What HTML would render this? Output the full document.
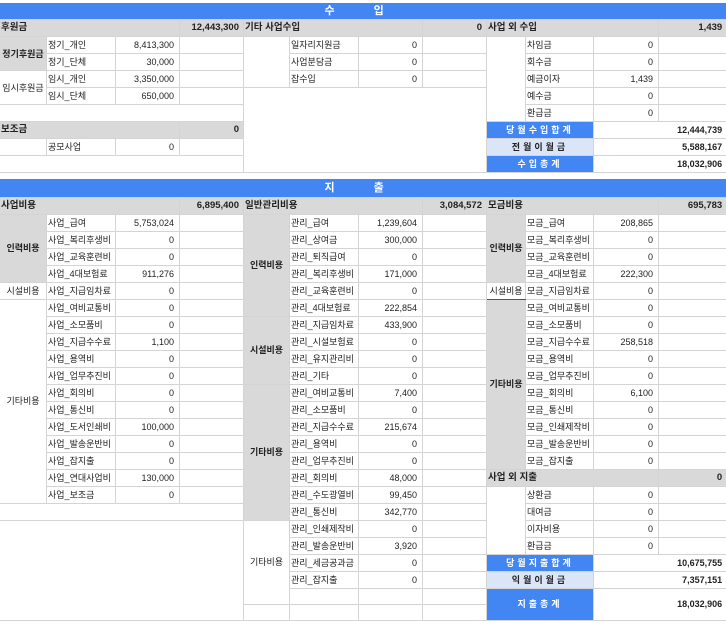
<!DOCTYPE html>
<html><head><meta charset="utf-8"><style>
body{margin:0;background:#fff;width:726px;height:626px;overflow:hidden;font-family:"Liberation Sans","Noto Sans CJK KR",sans-serif;color:#222}
table{border-collapse:collapse;table-layout:fixed;width:727px;position:absolute;left:-1px}
td{height:16px;padding:0 1px;border:1px solid #d4d4d4;font-size:9px;line-height:16px;white-space:nowrap;overflow:hidden;box-sizing:border-box}
.g{background:#d9d9d9;font-weight:bold;font-size:9.5px}
.gl{background:#d9d9d9;font-weight:bold;text-align:center;border-top:1px solid #555}
.c{text-align:center}
.r{text-align:right;padding-right:5px}
.rb{text-align:right;font-weight:bold;padding-right:4px}
.bl{background:#4286f4;color:#fff;font-weight:bold;text-align:center;letter-spacing:3px}
.lb{background:#dae6f8;font-weight:bold;text-align:center;letter-spacing:3px}
.hd{background:#4286f4;color:#fff;font-weight:bold;font-size:11px;text-align:center;letter-spacing:18px;height:16px;border:none}
</style></head><body>
<table style="top:3px">
<colgroup><col width="47"><col width="69"><col width="64"><col width="64"><col width="46"><col width="69"><col width="64"><col width="64"><col width="39"><col width="68"><col width="65"><col width="68"></colgroup>
<tr><td colspan="12" class="hd">수 입</td></tr>
<tr><td colspan="3" class="g">후원금</td><td class="g rb">12,443,300</td><td colspan="3" class="g">기타 사업수입</td><td class="g rb">0</td><td colspan="3" class="g">사업 외 수입</td><td class="g rb">1,439</td></tr>
<tr><td rowspan="2" class="gl">정기후원금</td><td>정기_개인</td><td class="r">8,413,300</td><td></td><td rowspan="3"></td><td>일자리지원금</td><td class="r">0</td><td></td><td rowspan="5"></td><td>차임금</td><td class="r">0</td><td></td></tr>
<tr><td>정기_단체</td><td class="r">30,000</td><td></td><td>사업분담금</td><td class="r">0</td><td></td><td>회수금</td><td class="r">0</td><td></td></tr>
<tr><td rowspan="2" class="c">임시후원금</td><td>임시_개인</td><td class="r">3,350,000</td><td></td><td>잡수입</td><td class="r">0</td><td></td><td>예금이자</td><td class="r">1,439</td><td></td></tr>
<tr><td>임시_단체</td><td class="r">650,000</td><td></td><td colspan="4" rowspan="5"></td><td>예수금</td><td class="r">0</td><td></td></tr>
<tr><td colspan="4"></td><td>환급금</td><td class="r">0</td><td></td></tr>
<tr><td colspan="3" class="g">보조금</td><td class="g rb">0</td><td colspan="2" class="bl">당월수입합계</td><td colspan="2" class="rb">12,444,739</td></tr>
<tr><td></td><td>공모사업</td><td class="r">0</td><td></td><td colspan="2" class="lb">전월이월금</td><td colspan="2" class="rb">5,588,167</td></tr>
<tr><td colspan="4"></td><td colspan="2" class="bl">수입총계</td><td colspan="2" class="rb">18,032,906</td></tr>
</table>
<table style="top:179px">
<colgroup><col width="47"><col width="69"><col width="64"><col width="64"><col width="46"><col width="69"><col width="64"><col width="64"><col width="39"><col width="68"><col width="65"><col width="68"></colgroup>
<tr><td colspan="12" class="hd" style="height:18px">지 출</td></tr>
<tr><td colspan="3" class="g">사업비용</td><td class="g rb">6,895,400</td><td colspan="3" class="g">일반관리비용</td><td class="g rb">3,084,572</td><td colspan="3" class="g">모금비용</td><td class="g rb">695,783</td></tr>
<tr><td rowspan="4" class="gl">인력비용</td><td>사업_급여</td><td class="r">5,753,024</td><td></td><td rowspan="6" class="gl">인력비용</td><td>관리_급여</td><td class="r">1,239,604</td><td></td><td rowspan="4" class="gl">인력비용</td><td>모금_급여</td><td class="r">208,865</td><td></td></tr>
<tr><td>사업_복리후생비</td><td class="r">0</td><td></td><td>관리_상여금</td><td class="r">300,000</td><td></td><td>모금_복리후생비</td><td class="r">0</td><td></td></tr>
<tr><td>사업_교육훈련비</td><td class="r">0</td><td></td><td>관리_퇴직급여</td><td class="r">0</td><td></td><td>모금_교육훈련비</td><td class="r">0</td><td></td></tr>
<tr><td>사업_4대보험료</td><td class="r">911,276</td><td></td><td>관리_복리후생비</td><td class="r">171,000</td><td></td><td>모금_4대보험료</td><td class="r">222,300</td><td></td></tr>
<tr><td class="c">시설비용</td><td>사업_지급임차료</td><td class="r">0</td><td></td><td>관리_교육훈련비</td><td class="r">0</td><td></td><td class="c" style="border-bottom:1px solid #555">시설비용</td><td>모금_지급임차료</td><td class="r">0</td><td></td></tr>
<tr><td rowspan="12" class="c">기타비용</td><td>사업_여비교통비</td><td class="r">0</td><td></td><td>관리_4대보험료</td><td class="r">222,854</td><td></td><td rowspan="10" class="gl">기타비용</td><td>모금_여비교통비</td><td class="r">0</td><td></td></tr>
<tr><td>사업_소모품비</td><td class="r">0</td><td></td><td rowspan="4" class="gl">시설비용</td><td>관리_지급임차료</td><td class="r">433,900</td><td></td><td>모금_소모품비</td><td class="r">0</td><td></td></tr>
<tr><td>사업_지급수수료</td><td class="r">1,100</td><td></td><td>관리_시설보험료</td><td class="r">0</td><td></td><td>모금_지급수수료</td><td class="r">258,518</td><td></td></tr>
<tr><td>사업_용역비</td><td class="r">0</td><td></td><td>관리_유지관리비</td><td class="r">0</td><td></td><td>모금_용역비</td><td class="r">0</td><td></td></tr>
<tr><td>사업_업무추진비</td><td class="r">0</td><td></td><td>관리_기타</td><td class="r">0</td><td></td><td>모금_업무추진비</td><td class="r">0</td><td></td></tr>
<tr><td>사업_회의비</td><td class="r">0</td><td></td><td rowspan="8" class="gl">기타비용</td><td>관리_여비교통비</td><td class="r">7,400</td><td></td><td>모금_회의비</td><td class="r">6,100</td><td></td></tr>
<tr><td>사업_통신비</td><td class="r">0</td><td></td><td>관리_소모품비</td><td class="r">0</td><td></td><td>모금_통신비</td><td class="r">0</td><td></td></tr>
<tr><td>사업_도서인쇄비</td><td class="r">100,000</td><td></td><td>관리_지급수수료</td><td class="r">215,674</td><td></td><td>모금_인쇄제작비</td><td class="r">0</td><td></td></tr>
<tr><td>사업_발송운반비</td><td class="r">0</td><td></td><td>관리_용역비</td><td class="r">0</td><td></td><td>모금_발송운반비</td><td class="r">0</td><td></td></tr>
<tr><td>사업_잡지출</td><td class="r">0</td><td></td><td>관리_업무추진비</td><td class="r">0</td><td></td><td>모금_잡지출</td><td class="r">0</td><td></td></tr>
<tr><td>사업_연대사업비</td><td class="r">130,000</td><td></td><td>관리_회의비</td><td class="r">48,000</td><td></td><td colspan="3" class="g">사업 외 지출</td><td class="g rb">0</td></tr>
<tr><td>사업_보조금</td><td class="r">0</td><td></td><td>관리_수도광열비</td><td class="r">99,450</td><td></td><td rowspan="4"></td><td>상환금</td><td class="r">0</td><td></td></tr>
<tr><td colspan="4"></td><td>관리_통신비</td><td class="r">342,770</td><td></td><td>대여금</td><td class="r">0</td><td></td></tr>
<tr><td colspan="4" rowspan="6"></td><td rowspan="5" class="c">기타비용</td><td>관리_인쇄제작비</td><td class="r">0</td><td></td><td>이자비용</td><td class="r">0</td><td></td></tr>
<tr><td>관리_발송운반비</td><td class="r">3,920</td><td></td><td>환급금</td><td class="r">0</td><td></td></tr>
<tr><td>관리_세금공과금</td><td class="r">0</td><td></td><td colspan="2" class="bl">당월지출합계</td><td colspan="2" class="rb">10,675,755</td></tr>
<tr><td>관리_잡지출</td><td class="r">0</td><td></td><td colspan="2" class="lb">익월이월금</td><td colspan="2" class="rb">7,357,151</td></tr>
<tr><td></td><td></td><td></td><td colspan="2" rowspan="2" class="bl">지출총계</td><td colspan="2" rowspan="2" class="rb">18,032,906</td></tr>
<tr><td></td><td></td><td></td><td></td></tr>
</table>
</body></html>
